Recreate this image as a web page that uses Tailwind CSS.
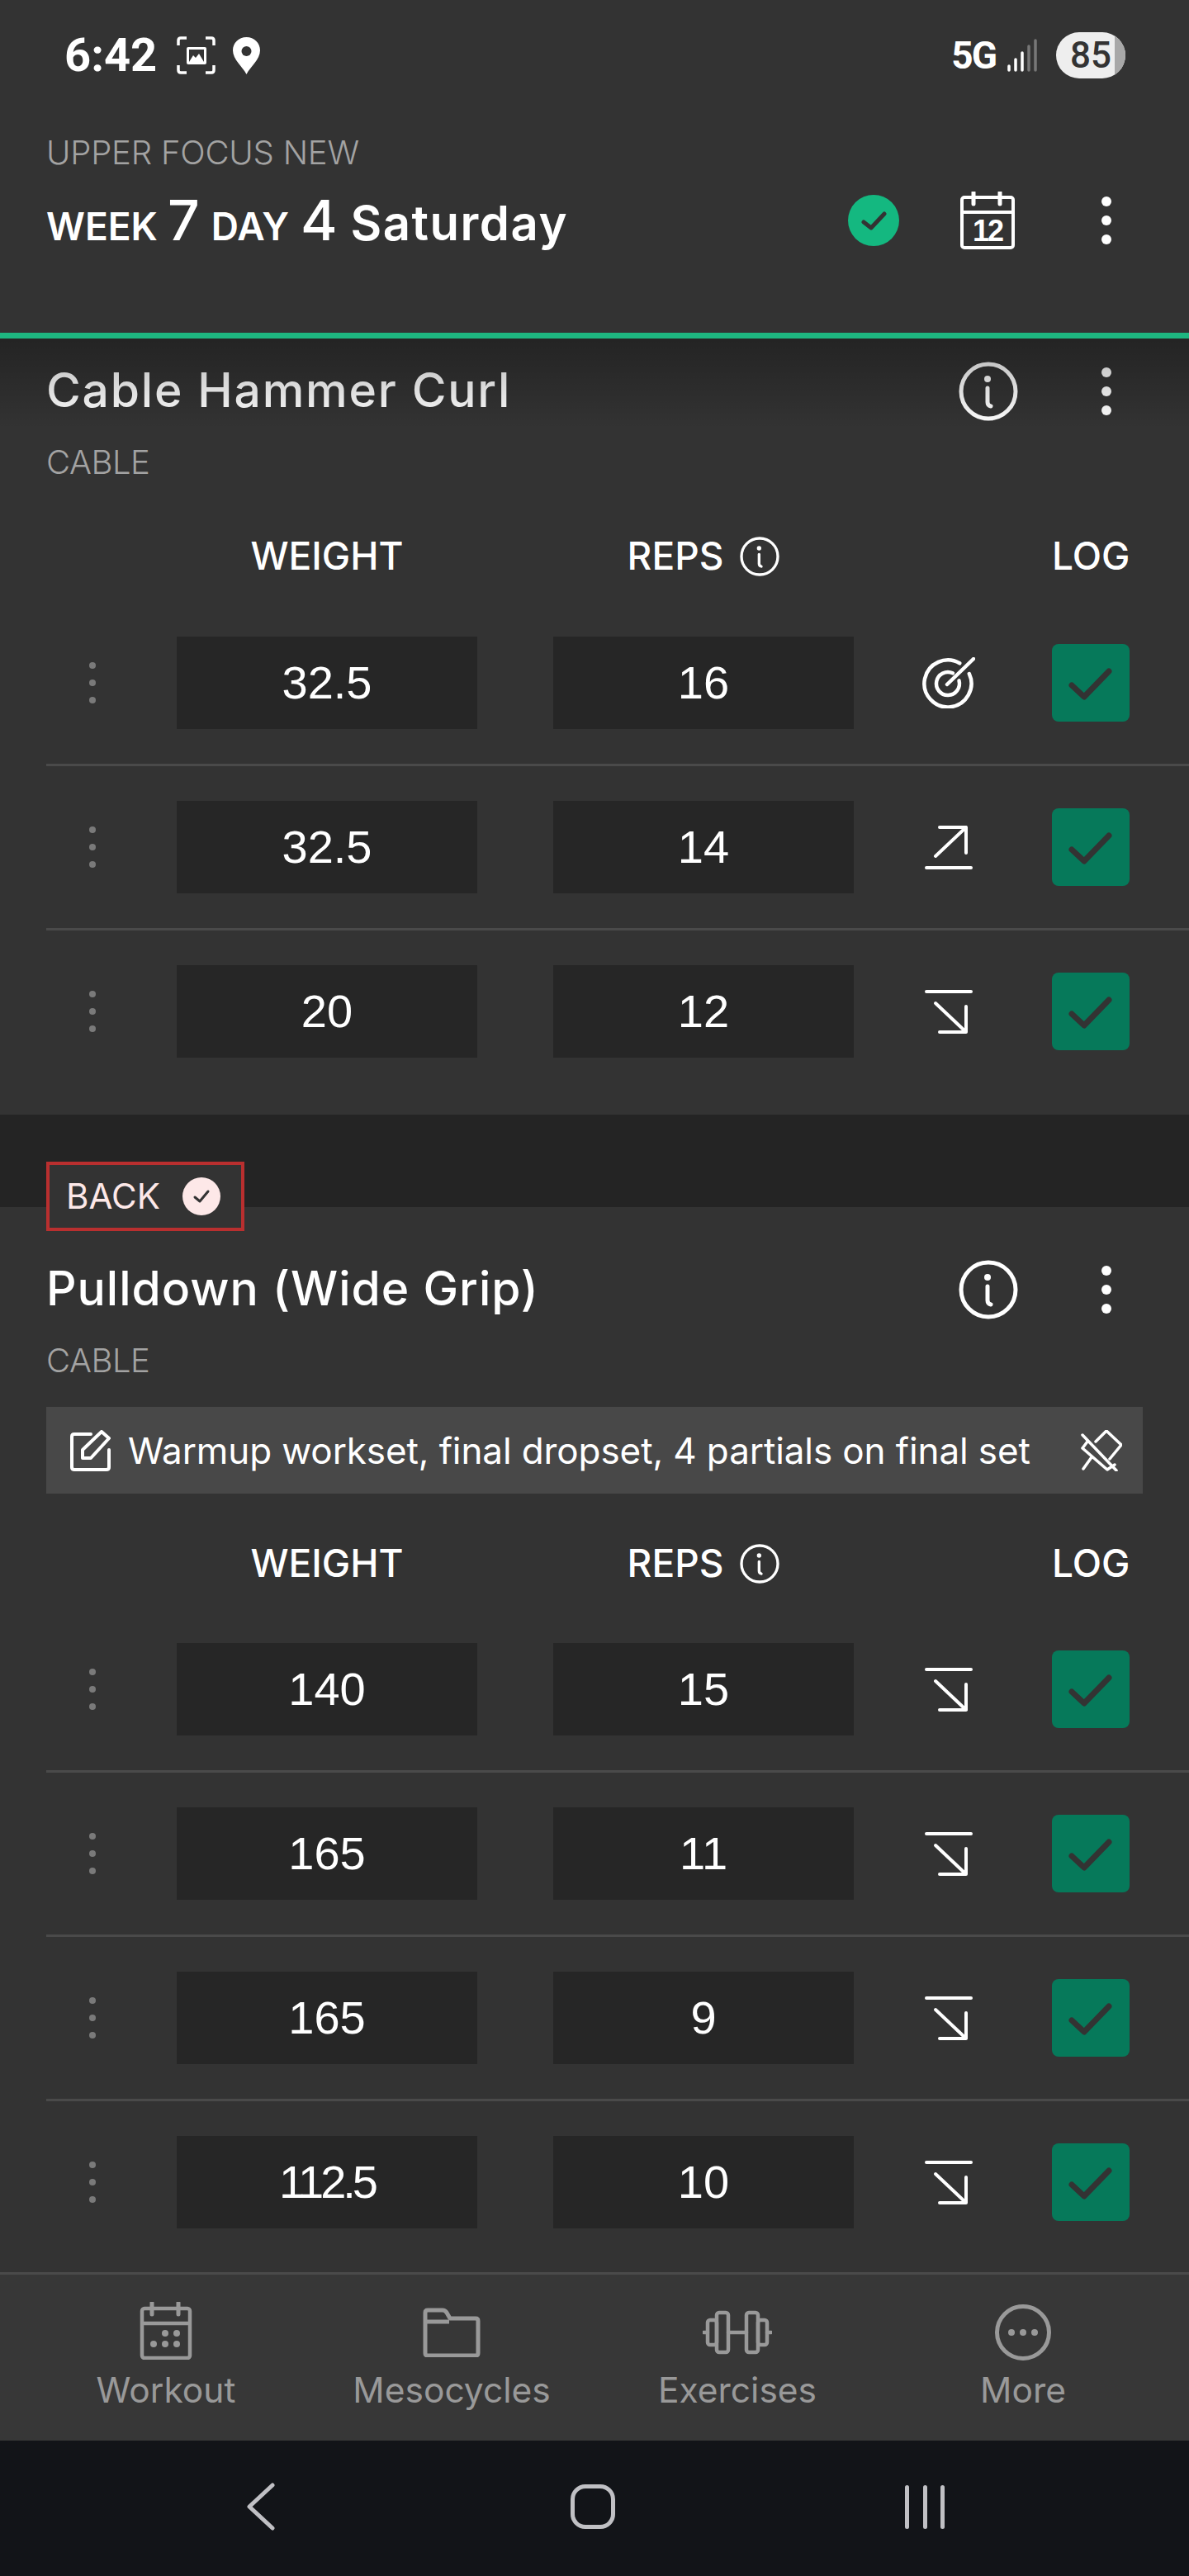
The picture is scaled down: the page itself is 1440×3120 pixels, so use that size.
<!DOCTYPE html>
<html lang="en">
<head>
    <meta charset="UTF-8">
    <meta name="viewport" content="width=device-width, initial-scale=1.0">
    <title>Workout</title>
    <script src="https://cdn.jsdelivr.net/npm/@tailwindcss/browser@4"></script>
</head>
<body class="bg-[#333333] text-white font-['Inter',sans-serif]">
    <!-- shared icons -->
    <svg class="hidden">
        <symbol id="dots" viewBox="0 0 14 60"><circle cx="7" cy="7" r="6" fill="currentColor"/><circle cx="7" cy="30" r="6" fill="currentColor"/><circle cx="7" cy="53" r="6" fill="currentColor"/></symbol>
        <symbol id="handle" viewBox="0 0 8 50"><circle cx="4" cy="4" r="4" fill="currentColor"/><circle cx="4" cy="25" r="4" fill="currentColor"/><circle cx="4" cy="46" r="4" fill="currentColor"/></symbol>
        <symbol id="info" viewBox="0 0 72 72"><circle cx="36" cy="36" r="33" fill="none" stroke="currentColor" stroke-width="5"/><circle cx="35" cy="21" r="4" fill="currentColor"/><path d="M35 32V49Q35 53 39 54" fill="none" stroke="currentColor" stroke-width="5" stroke-linecap="round"/></symbol>
        <symbol id="check" viewBox="0 0 94 94"><path d="M24 50L39 64L69 33" fill="none" stroke="currentColor" stroke-width="7" stroke-linecap="round" stroke-linejoin="round"/></symbol>
        <symbol id="target" viewBox="0 0 64 62"><g fill="none" stroke="currentColor" stroke-width="4.5" stroke-linecap="round"><path d="M56.8 20A28.5 28.5 0 1 1 45.25 7.3"/><path d="M44.5 28.4A14 14 0 1 1 36.9 19.3"/><path d="M30 33L62 2"/></g></symbol>
        <symbol id="up" viewBox="0 0 58 55"><g fill="none" stroke="currentColor" stroke-width="4" stroke-linecap="round" stroke-linejoin="round"><path d="M13 38L50 3M18 3H50V34M2 52H56"/></g></symbol>
        <symbol id="down" viewBox="0 0 58 55"><g fill="none" stroke="currentColor" stroke-width="4" stroke-linecap="round" stroke-linejoin="round"><path d="M13 17L50 52M18 52H50V21M2 3H56"/></g></symbol>
    </svg>

    <div class="flex flex-col h-[3120px] overflow-hidden">
        <header class="h-[410px] shrink-0 border-b-[7px] border-[#1eb680] px-[56px] relative">
            <div class="flex items-center h-[134px] pl-[22px] pr-[21px]">
                <span class="font-['Roboto',sans-serif] font-bold text-[56px] leading-none">6:42</span>
                <svg class="ml-[24px] w-[47px] h-[46px]" viewBox="0 0 47 46" fill="none" stroke="white" stroke-width="3.500"><path d="M2 11V5Q2 2 5 2H12M35 2H42Q45 2 45 5V11M2 35V41Q2 44 5 44H12M35 44H42Q45 44 45 41V35"/><rect x="12" y="13" width="24" height="21" rx="2" fill="white" stroke="none"/><rect x="15" y="16" width="18" height="15" fill="#333333" stroke="none"/><path d="M15 31L20 23L23 26L27 21L33 31Z" fill="white" stroke="none"/></svg>
                <svg class="ml-[21px] w-[33px] h-[45px]" viewBox="0 0 33 45"><path d="M16.500 0C7 0 0 7 0 16C0 27 12 36 16.500 45C21 36 33 27 33 16C33 7 26 0 16.500 0Z" fill="white"/><circle cx="16.500" cy="17" r="6" fill="#333333"/></svg>
                <span class="ml-auto font-['Roboto',sans-serif] font-bold text-[46px] leading-none tracking-[-2px]">5G</span>
                <svg class="ml-[14px] w-[38px] h-[40px]" viewBox="0 0 38 40"><g stroke-width="3.500" stroke-linecap="round"><path d="M2 33V38M10 25V38M18 17V38" stroke="white"/><path d="M26 9V38M34 2V38" stroke="#777777"/></g></svg>
                <div class="ml-[21px] relative w-[84px] h-[56px] rounded-full overflow-hidden bg-[#eeeeee] flex items-center justify-center">
                    <div class="absolute right-0 inset-y-0 w-[13px] bg-[#a8a8a8]"></div>
                    <span class="relative font-['Roboto',sans-serif] font-medium text-[44px] leading-none text-[#333333]">85</span>
                </div>
            </div>
            <p class="mt-[27px] font-light text-[40px] leading-[48px] tracking-[-0.2px] text-[#a3a3a3]">UPPER FOCUS NEW</p>
            <div class="absolute left-[56px] right-[93px] top-[232px] h-[70px] flex items-center justify-between">
                <div class="flex items-baseline font-semibold text-[46px] leading-none -mt-[2px]">
                    <span>WEEK</span>
                    <span class="ml-[12px] text-[68px] font-medium">7</span>
                    <span class="ml-[14px]">DAY</span>
                    <span class="ml-[14px] text-[68px] font-medium">4</span>
                    <span class="ml-[16px] text-[58px] tracking-[1.5px]">Saturday</span>
                </div>
                <div class="flex items-center">
                    <div class="w-[62px] h-[62px] rounded-full bg-[#14b880] flex items-center justify-center">
                        <svg class="w-[31px] h-[23px]" viewBox="0 0 31 23" fill="none" stroke="#333333" stroke-width="5" stroke-linecap="round" stroke-linejoin="round"><path d="M3 13L12 20L28 3"/></svg>
                    </div>
                    <svg class="ml-[74px] w-[66px] h-[70px]" viewBox="0 0 66 70"><g fill="none" stroke="white" stroke-width="4"><rect x="2" y="7" width="62" height="61" rx="3"/><path d="M2 25H64"/></g><path d="M16 1V15M48 1V15" stroke="white" stroke-width="5" stroke-linecap="round"/><text x="33" y="60" text-anchor="middle" fill="white" font-family="Liberation Sans" font-weight="700" font-size="36" letter-spacing="-2">12</text></svg>
                    <svg class="ml-[104px] w-[14px] h-[60px] text-white"><use href="#dots"/></svg>
                </div>
            </div>
        </header>

        <main class="relative flex-1 overflow-hidden">
            <div class="absolute inset-x-0 top-0 h-[110px] bg-gradient-to-b from-black/30 to-transparent pointer-events-none"></div>

            <!-- Cable Hammer Curl -->
            <section class="h-[940px]">
                <div class="pt-[29px] h-[99px] pl-[56px] pr-[93px] flex items-center justify-between">
                    <h2 class="font-medium text-[57px] leading-[70px] tracking-[1.8px] -mt-[2px]">Cable Hammer Curl</h2>
                    <div class="flex items-center">
                        <svg class="w-[72px] h-[72px] text-white"><use href="#info"/></svg>
                        <svg class="ml-[100px] w-[14px] h-[60px] text-white"><use href="#dots"/></svg>
                    </div>
                </div>
                <p class="mt-[21px] pl-[56px] font-light text-[40px] leading-[60px] tracking-[-0.5px] text-[#a3a3a3]">CABLE</p>
                <div class="mt-[49px] h-[64px] pl-[56px] grid grid-cols-[158px_364px_92px_364px_240px_94px] items-center font-medium text-[46px]">
                    <span class="col-start-2 text-center">WEIGHT</span>
                    <span class="col-start-4 flex items-center justify-center"><span>REPS</span><svg class="ml-[20px] w-[48px] h-[48px] text-white"><use href="#info"/></svg></span>
                    <span class="col-start-6 text-center">LOG</span>
                </div>
                <div class="mt-[26px]">
                    <div class="ml-[56px] h-[199px] border-b-[3px] border-[#4a4a4a] grid grid-cols-[158px_364px_92px_364px_240px_94px] items-center">
                        <svg class="ml-[52px] w-[8px] h-[50px] text-[#7a7a7a]"><use href="#handle"/></svg>
                        <div class="h-[112px] bg-[#262626] flex items-center justify-center font-['Liberation_Sans',sans-serif] text-[56px]">32.5</div>
                        <div class="col-start-4 h-[112px] bg-[#262626] flex items-center justify-center font-['Liberation_Sans',sans-serif] text-[56px]">16</div>
                        <div class="pr-[10px] flex justify-center"><svg class="w-[64px] h-[62px] text-white"><use href="#target"/></svg></div>
                        <div class="h-[94px] rounded-[8px] bg-[#06795a] text-[#333333]"><svg class="w-[94px] h-[94px]"><use href="#check"/></svg></div>
                    </div>
                    <div class="ml-[56px] h-[199px] border-b-[3px] border-[#4a4a4a] grid grid-cols-[158px_364px_92px_364px_240px_94px] items-center">
                        <svg class="ml-[52px] w-[8px] h-[50px] text-[#7a7a7a]"><use href="#handle"/></svg>
                        <div class="h-[112px] bg-[#262626] flex items-center justify-center font-['Liberation_Sans',sans-serif] text-[56px]">32.5</div>
                        <div class="col-start-4 h-[112px] bg-[#262626] flex items-center justify-center font-['Liberation_Sans',sans-serif] text-[56px]">14</div>
                        <div class="pr-[10px] flex justify-center"><svg class="w-[58px] h-[55px] text-white"><use href="#up"/></svg></div>
                        <div class="h-[94px] rounded-[8px] bg-[#06795a] text-[#333333]"><svg class="w-[94px] h-[94px]"><use href="#check"/></svg></div>
                    </div>
                    <div class="ml-[56px] h-[196px] grid grid-cols-[158px_364px_92px_364px_240px_94px] items-center">
                        <svg class="ml-[52px] w-[8px] h-[50px] text-[#7a7a7a]"><use href="#handle"/></svg>
                        <div class="h-[112px] bg-[#262626] flex items-center justify-center font-['Liberation_Sans',sans-serif] text-[56px]">20</div>
                        <div class="col-start-4 h-[112px] bg-[#262626] flex items-center justify-center font-['Liberation_Sans',sans-serif] text-[56px]">12</div>
                        <div class="pr-[10px] flex justify-center"><svg class="w-[58px] h-[55px] text-white"><use href="#down"/></svg></div>
                        <div class="h-[94px] rounded-[8px] bg-[#06795a] text-[#333333]"><svg class="w-[94px] h-[94px]"><use href="#check"/></svg></div>
                    </div>
                </div>
            </section>

            <!-- BACK muscle group band -->
            <div class="relative h-[112px] bg-[#242424]">
                <div class="absolute left-[56px] top-[57px] w-[240px] h-[84px] border-[4px] border-[#b92f2f] bg-[#333333] flex items-center pl-[20px] text-[#fde8e8]">
                    <span class="text-[42px] leading-none">BACK</span>
                    <div class="absolute left-[161px] top-[15px] w-[46px] h-[46px] rounded-full bg-[#fde8e8] flex items-center justify-center">
                        <svg class="w-[22px] h-[18px]" viewBox="0 0 22 18" fill="none" stroke="#333333" stroke-width="3" stroke-linecap="round" stroke-linejoin="round"><path d="M3 10L9 15L19 3"/></svg>
                    </div>
                </div>
            </div>

            <!-- Pulldown -->
            <section>
                <div class="mt-[65px] h-[70px] pl-[56px] pr-[93px] flex items-center justify-between">
                    <h2 class="font-medium text-[57px] leading-[70px] tracking-[1px] -mt-[2px]">Pulldown (Wide Grip)</h2>
                    <div class="flex items-center">
                        <svg class="w-[72px] h-[72px] text-white"><use href="#info"/></svg>
                        <svg class="ml-[100px] w-[14px] h-[60px] text-white"><use href="#dots"/></svg>
                    </div>
                </div>
                <p class="mt-[21px] pl-[56px] font-light text-[40px] leading-[60px] tracking-[-0.5px] text-[#a3a3a3]">CABLE</p>
                <div class="mt-[26px] ml-[56px] w-[1328px] h-[105px] bg-[#484848] flex items-center pl-[29px] pr-[25px]">
                    <svg class="w-[50px] h-[50px] shrink-0" viewBox="0 0 50 50" fill="none" stroke="white" stroke-width="4" stroke-linecap="round" stroke-linejoin="round"><path d="M25 5H5Q2 5 2 8V45Q2 48 5 48H44Q47 48 47 45V24"/><path d="M15 34V24L38 2L47 10L25 34Z"/></svg>
                    <span class="ml-[20px] font-normal text-[44px] leading-none tracking-[-0.1px] whitespace-nowrap">Warmup workset, final dropset, 4 partials on final set</span>
                    <svg class="ml-auto w-[50px] h-[50px] shrink-0" viewBox="0 0 50 50" fill="none" stroke="white" stroke-width="3.500" stroke-linecap="round" stroke-linejoin="round"><path d="M2 6L43 49M2 22L8 14M2 22L32 48L41 42M18 14L31 1L49 18L35 35M3 47L13 33"/></svg>
                </div>
                <div class="mt-[50px] h-[64px] pl-[56px] grid grid-cols-[158px_364px_92px_364px_240px_94px] items-center font-medium text-[46px]">
                    <span class="col-start-2 text-center">WEIGHT</span>
                    <span class="col-start-4 flex items-center justify-center"><span>REPS</span><svg class="ml-[20px] w-[48px] h-[48px] text-white"><use href="#info"/></svg></span>
                    <span class="col-start-6 text-center">LOG</span>
                </div>
                <div class="mt-[25px]">
                    <div class="ml-[56px] h-[199px] border-b-[3px] border-[#4a4a4a] grid grid-cols-[158px_364px_92px_364px_240px_94px] items-center">
                        <svg class="ml-[52px] w-[8px] h-[50px] text-[#7a7a7a]"><use href="#handle"/></svg>
                        <div class="h-[112px] bg-[#262626] flex items-center justify-center font-['Liberation_Sans',sans-serif] text-[56px]">140</div>
                        <div class="col-start-4 h-[112px] bg-[#262626] flex items-center justify-center font-['Liberation_Sans',sans-serif] text-[56px]">15</div>
                        <div class="pr-[10px] flex justify-center"><svg class="w-[58px] h-[55px] text-white"><use href="#down"/></svg></div>
                        <div class="h-[94px] rounded-[8px] bg-[#06795a] text-[#333333]"><svg class="w-[94px] h-[94px]"><use href="#check"/></svg></div>
                    </div>
                    <div class="ml-[56px] h-[199px] border-b-[3px] border-[#4a4a4a] grid grid-cols-[158px_364px_92px_364px_240px_94px] items-center">
                        <svg class="ml-[52px] w-[8px] h-[50px] text-[#7a7a7a]"><use href="#handle"/></svg>
                        <div class="h-[112px] bg-[#262626] flex items-center justify-center font-['Liberation_Sans',sans-serif] text-[56px]">165</div>
                        <div class="col-start-4 h-[112px] bg-[#262626] flex items-center justify-center font-['Liberation_Sans',sans-serif] text-[56px]">11</div>
                        <div class="pr-[10px] flex justify-center"><svg class="w-[58px] h-[55px] text-white"><use href="#down"/></svg></div>
                        <div class="h-[94px] rounded-[8px] bg-[#06795a] text-[#333333]"><svg class="w-[94px] h-[94px]"><use href="#check"/></svg></div>
                    </div>
                    <div class="ml-[56px] h-[199px] border-b-[3px] border-[#4a4a4a] grid grid-cols-[158px_364px_92px_364px_240px_94px] items-center">
                        <svg class="ml-[52px] w-[8px] h-[50px] text-[#7a7a7a]"><use href="#handle"/></svg>
                        <div class="h-[112px] bg-[#262626] flex items-center justify-center font-['Liberation_Sans',sans-serif] text-[56px]">165</div>
                        <div class="col-start-4 h-[112px] bg-[#262626] flex items-center justify-center font-['Liberation_Sans',sans-serif] text-[56px]">9</div>
                        <div class="pr-[10px] flex justify-center"><svg class="w-[58px] h-[55px] text-white"><use href="#down"/></svg></div>
                        <div class="h-[94px] rounded-[8px] bg-[#06795a] text-[#333333]"><svg class="w-[94px] h-[94px]"><use href="#check"/></svg></div>
                    </div>
                    <div class="ml-[56px] h-[196px] grid grid-cols-[158px_364px_92px_364px_240px_94px] items-center">
                        <svg class="ml-[52px] w-[8px] h-[50px] text-[#7a7a7a]"><use href="#handle"/></svg>
                        <div class="h-[112px] bg-[#262626] flex items-center justify-center font-['Liberation_Sans',sans-serif] text-[56px] tracking-[-4px]">112.5</div>
                        <div class="col-start-4 h-[112px] bg-[#262626] flex items-center justify-center font-['Liberation_Sans',sans-serif] text-[56px]">10</div>
                        <div class="pr-[10px] flex justify-center"><svg class="w-[58px] h-[55px] text-white"><use href="#down"/></svg></div>
                        <div class="h-[94px] rounded-[8px] bg-[#06795a] text-[#333333]"><svg class="w-[94px] h-[94px]"><use href="#check"/></svg></div>
                    </div>
                </div>
            </section>
        </main>

        <nav class="h-[204px] shrink-0 border-t-[3px] border-[#4a4a4a] bg-[#373737] px-[28px] grid grid-cols-4 text-[#999999] text-[42.5px]">
            <div class="flex flex-col items-center">
                <svg class="mt-[33px] w-[64px] h-[70px]" viewBox="0 0 64 70"><g fill="none" stroke="currentColor" stroke-width="4.500"><rect x="3" y="8" width="58" height="60" rx="3"/><path d="M3 26H61"/></g><path d="M15 1V15M47 1V15" stroke="currentColor" stroke-width="5" stroke-linecap="round"/><g fill="currentColor"><circle cx="31" cy="38" r="4"/><circle cx="45" cy="38" r="4"/><circle cx="17" cy="51" r="4"/><circle cx="31" cy="51" r="4"/><circle cx="45" cy="51" r="4"/></g></svg>
                <span class="mt-[12px] leading-[50px]">Workout</span>
            </div>
            <div class="flex flex-col items-center">
                <svg class="mt-[40px] w-[70px] h-[60px]" viewBox="0 0 70 60" fill="none" stroke="currentColor" stroke-width="5" stroke-linejoin="round"><path d="M3 6Q3 3 6 3H24Q27 3 29 6L33 13H64Q67 13 67 16V55Q67 58 64 58H6Q3 58 3 55Z"/><path d="M3 17H32"/></svg>
                <span class="mt-[15px] leading-[50px]">Mesocycles</span>
            </div>
            <div class="flex flex-col items-center">
                <svg class="mt-[43px] w-[84px] h-[54px]" viewBox="0 0 84 54" fill="none" stroke="currentColor" stroke-width="4.500" stroke-linejoin="round"><rect x="17" y="3" width="14" height="48" rx="3"/><rect x="53" y="3" width="14" height="48" rx="3"/><rect x="6" y="12" width="11" height="30" rx="3"/><rect x="67" y="12" width="11" height="30" rx="3"/><path d="M31 27H53M1 27H6M78 27H83" stroke-linecap="round"/></svg>
                <span class="mt-[18px] leading-[50px]">Exercises</span>
            </div>
            <div class="flex flex-col items-center">
                <svg class="mt-[36px] w-[68px] h-[68px]" viewBox="0 0 68 68"><circle cx="34" cy="34" r="31.500" fill="none" stroke="currentColor" stroke-width="5"/><g fill="currentColor"><circle cx="20" cy="34" r="4"/><circle cx="34" cy="34" r="4"/><circle cx="48" cy="34" r="4"/></g></svg>
                <span class="mt-[11px] leading-[50px]">More</span>
            </div>
        </nav>

        <div class="h-[164px] shrink-0 bg-[#121418] relative text-[#c0c0c4]">
            <svg class="absolute left-[298px] top-[51px] w-[36px] h-[58px]" viewBox="0 0 36 58" fill="none" stroke="currentColor" stroke-width="5" stroke-linecap="round" stroke-linejoin="round"><path d="M32 3L4 29L32 55"/></svg>
            <div class="absolute left-[691px] top-[53px] w-[54px] h-[54px] rounded-[18px] border-[5px] border-[#c0c0c4]"></div>
            <div class="absolute left-[1096px] top-[54px] w-[48px] h-[53px] flex justify-between">
                <div class="w-[5px] rounded-full bg-[#c0c0c4]"></div>
                <div class="w-[5px] rounded-full bg-[#c0c0c4]"></div>
                <div class="w-[5px] rounded-full bg-[#c0c0c4]"></div>
            </div>
        </div>
    </div>
</body>
</html>
